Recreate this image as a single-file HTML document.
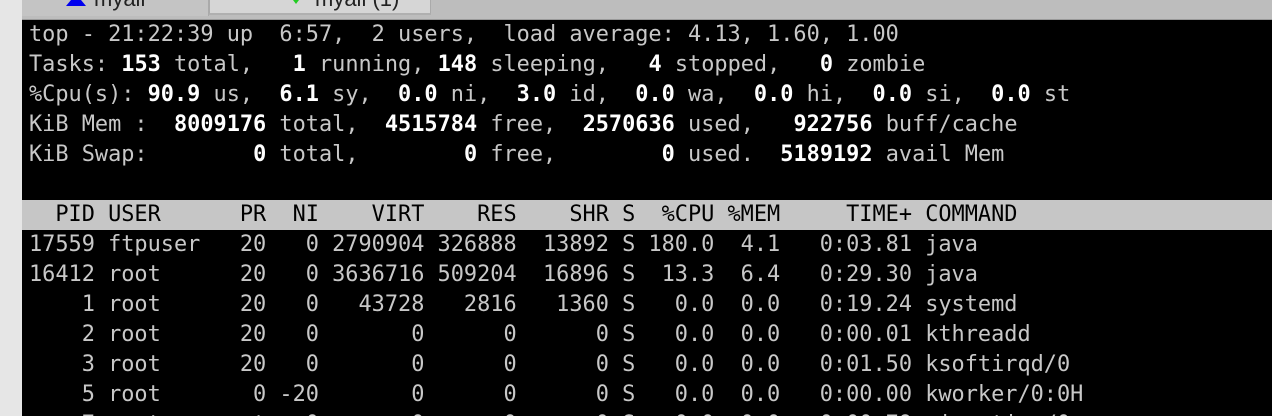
<!DOCTYPE html>
<html><head><style>
html,body{margin:0;padding:0;width:1272px;height:416px;overflow:hidden;background:#000;position:relative}
.left{position:absolute;left:0;top:0;width:22px;height:416px;background:#e6e6e6;border-right:1px solid #bdbdbd}
.tabbar{position:absolute;left:22px;top:0;width:1250px;height:19px;background:#bdbdbd;border-bottom:1px solid #999;overflow:hidden}
.tab1{position:absolute;left:0;top:0;width:186px;height:16px;background:#c4c4c4;border-right:1px solid #aaa;overflow:hidden}
.tab2{position:absolute;left:187px;top:0;width:220px;height:13px;background:#d6d6d6;border-left:1px solid #aaa;border-right:1px solid #aaa;border-bottom:2px solid #b0b0b0;overflow:hidden}
.tl{position:absolute;top:-14px;font-family:"Liberation Sans",sans-serif;font-size:22px;color:#222}
.term{position:absolute;left:22px;top:20px;width:1250px;height:396px;background:#000;overflow:hidden}
pre{margin:0;position:absolute;left:7px;top:0;height:396px;overflow:hidden;font-family:"DejaVu Sans Mono",monospace;font-size:21.9px;line-height:30px;color:#c8c8c8}
b{color:#fff;font-weight:bold}
.hdr{position:absolute;left:0;top:180px;width:1250px;height:30px;background:#c6c6c6}
.h{color:#000}
</style></head><body>
<div class="left"></div>
<div class="tabbar">
<div class="tab1"><div style="position:absolute;left:44px;top:-6px;width:0;height:0;border-left:10px solid transparent;border-right:10px solid transparent;border-bottom:12px solid #0000ee"></div><span class="tl" style="left:72px">myall</span></div>
<div class="tab2"><div style="position:absolute;left:80px;top:-4px;width:0;height:0;border-left:6px solid transparent;border-right:6px solid transparent;border-top:8px solid #22cc22"></div><span class="tl" style="left:105px">myall (1)</span></div>
</div>
<div class="term"><div class="hdr"></div>
<pre>top - 21:22:39 up  6:57,  2 users,  load average: 4.13, 1.60, 1.00
Tasks: <b>153</b> total,   <b>1</b> running, <b>148</b> sleeping,   <b>4</b> stopped,   <b>0</b> zombie
%Cpu(s): <b>90.9</b> us,  <b>6.1</b> sy,  <b>0.0</b> ni,  <b>3.0</b> id,  <b>0.0</b> wa,  <b>0.0</b> hi,  <b>0.0</b> si,  <b>0.0</b> st
KiB Mem :  <b>8009176</b> total,  <b>4515784</b> free,  <b>2570636</b> used,   <b>922756</b> buff/cache
KiB Swap:        <b>0</b> total,        <b>0</b> free,        <b>0</b> used.  <b>5189192</b> avail Mem

<span class="h">  PID USER      PR  NI    VIRT    RES    SHR S  %CPU %MEM     TIME+ COMMAND</span>
17559 ftpuser   20   0 2790904 326888  13892 S 180.0  4.1   0:03.81 java
16412 root      20   0 3636716 509204  16896 S  13.3  6.4   0:29.30 java
    1 root      20   0   43728   2816   1360 S   0.0  0.0   0:19.24 systemd
    2 root      20   0       0      0      0 S   0.0  0.0   0:00.01 kthreadd
    3 root      20   0       0      0      0 S   0.0  0.0   0:01.50 ksoftirqd/0
    5 root       0 -20       0      0      0 S   0.0  0.0   0:00.00 kworker/0:0H
    7 root      rt   0       0      0      0 S   0.0  0.0   0:00.79 migration/0</pre>
</div>
</body></html>
